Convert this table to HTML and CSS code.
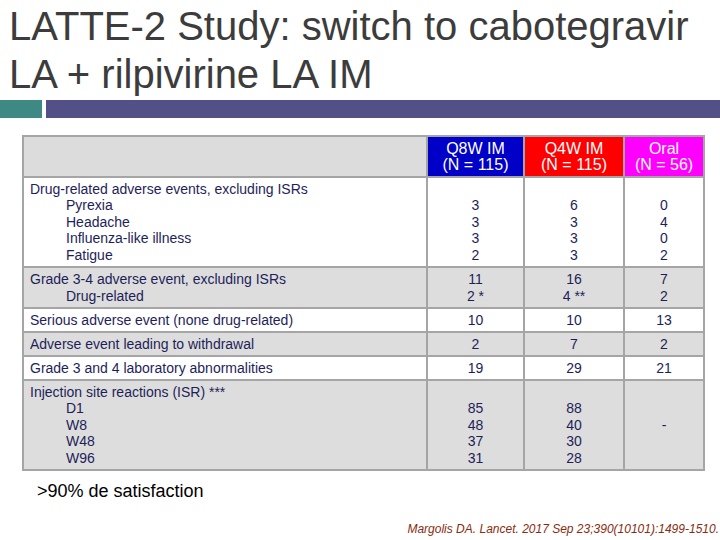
FILE: index.html
```html
<!DOCTYPE html>
<html>
<head>
<meta charset="utf-8">
<link rel="stylesheet" href="styles.css">
</head>
<body>
<h1 class="title">LATTE-2 Study: switch to cabotegravir<br>LA + rilpivirine LA IM</h1>
<div class="bars"><div class="bar-teal"></div><div class="bar-purple"></div></div>
<table class="ae">
  <colgroup>
    <col class="c-label"><col class="c-q8"><col class="c-q4"><col class="c-oral">
  </colgroup>
  <thead>
    <tr class="r-head">
      <th class="h-blank"></th>
      <th class="h-q8">Q8W IM<br>(N = 115)</th>
      <th class="h-q4">Q4W IM<br>(N = 115)</th>
      <th class="h-oral">Oral<br>(N = 56)</th>
    </tr>
  </thead>
  <tbody>
    <tr class="r-tall white">
      <td class="lbl">Drug-related adverse events, excluding ISRs<span class="sub">Pyrexia<br>Headache<br>Influenza-like illness<br>Fatigue</span></td>
      <td class="num"><br>3<br>3<br>3<br>2</td>
      <td class="num"><br>6<br>3<br>3<br>3</td>
      <td class="num"><br>0<br>4<br>0<br>2</td>
    </tr>
    <tr class="r-two grey">
      <td class="lbl">Grade 3-4 adverse event, excluding ISRs<span class="sub">Drug-related</span></td>
      <td class="num">11<br>2 *</td>
      <td class="num">16<br>4 **</td>
      <td class="num">7<br>2</td>
    </tr>
    <tr class="r-one white">
      <td class="lbl">Serious adverse event (none drug-related)</td>
      <td class="num">10</td><td class="num">10</td><td class="num">13</td>
    </tr>
    <tr class="r-one grey">
      <td class="lbl">Adverse event leading to withdrawal</td>
      <td class="num">2</td><td class="num">7</td><td class="num">2</td>
    </tr>
    <tr class="r-one white">
      <td class="lbl">Grade 3 and 4 laboratory abnormalities</td>
      <td class="num">19</td><td class="num">29</td><td class="num">21</td>
    </tr>
    <tr class="r-tall grey">
      <td class="lbl">Injection site reactions (ISR) ***<span class="sub">D1<br>W8<br>W48<br>W96</span></td>
      <td class="num"><br>85<br>48<br>37<br>31</td>
      <td class="num"><br>88<br>40<br>30<br>28</td>
      <td class="num">-</td>
    </tr>
  </tbody>
</table>
<p class="note">&gt;90% de satisfaction</p>
<p class="cite">Margolis DA. Lancet. 2017 Sep 23;390(10101):1499-1510.</p>
</body>
</html>
```
FILE: styles.css
```css
html, body {
  margin: 0;
  padding: 0;
  background: #ffffff;
  width: 720px;
  height: 540px;
  overflow: hidden;
  font-family: "Liberation Sans", Arial, sans-serif;
}

.title {
  margin: 0;
  padding: 2px 0 0 9px;
  font-size: 40px;
  font-weight: normal;
  line-height: 48px;
  color: #3c3c3c;
  white-space: nowrap;
}

.bars {
  display: flex;
  gap: 4px;
  margin-top: 2px;
  height: 18px;
}
.bar-teal { width: 42px; background: #3f8985; }
.bar-purple { flex: 1; background: #525086; }

.ae {
  margin: 17px 0 0 22px;
  border-collapse: collapse;
  table-layout: fixed;
  width: 681px;
  border: 2px solid #a5a5a5;
  font-size: 14px;
  color: #1e1e5a;
}
.c-label { width: 404px; }
.c-q8 { width: 97px; }
.c-q4 { width: 100px; }
.c-oral { width: 80px; }

.ae th, .ae td {
  border: 2px solid #a5a5a5;
  padding: 0;
}

.ae th {
  font-weight: normal;
  font-size: 16px;
  line-height: 16px;
  color: #ffffff;
  text-align: center;
  vertical-align: middle;
}
.r-head { height: 41px; }
.h-blank { background: #dcdcdc; }
.h-q8 { background: #0000c8; }
.h-q4 { background: #ff0000; }
.h-oral { background: #ff00ff; }

.ae td {
  line-height: 16.6px;
  vertical-align: middle;
}
.white td { background: #ffffff; }
.grey td { background: #dddddd; }

.r-tall { height: 90px; }
.r-two { height: 41px; }
.r-one { height: 24px; }

.lbl {
  padding-left: 6px !important;
  white-space: nowrap;
}
.sub {
  display: block;
  padding-left: 36px;
}
.num { text-align: center; }

.note {
  margin: 10px 0 0 37px;
  font-size: 18px;
  line-height: 21px;
  color: #000000;
}

.cite {
  margin: 20px 0 0 0;
  padding-right: 1px;
  text-align: right;
  font-size: 12px;
  line-height: 14px;
  font-style: italic;
  color: #8a2c10;
  white-space: nowrap;
}
```
